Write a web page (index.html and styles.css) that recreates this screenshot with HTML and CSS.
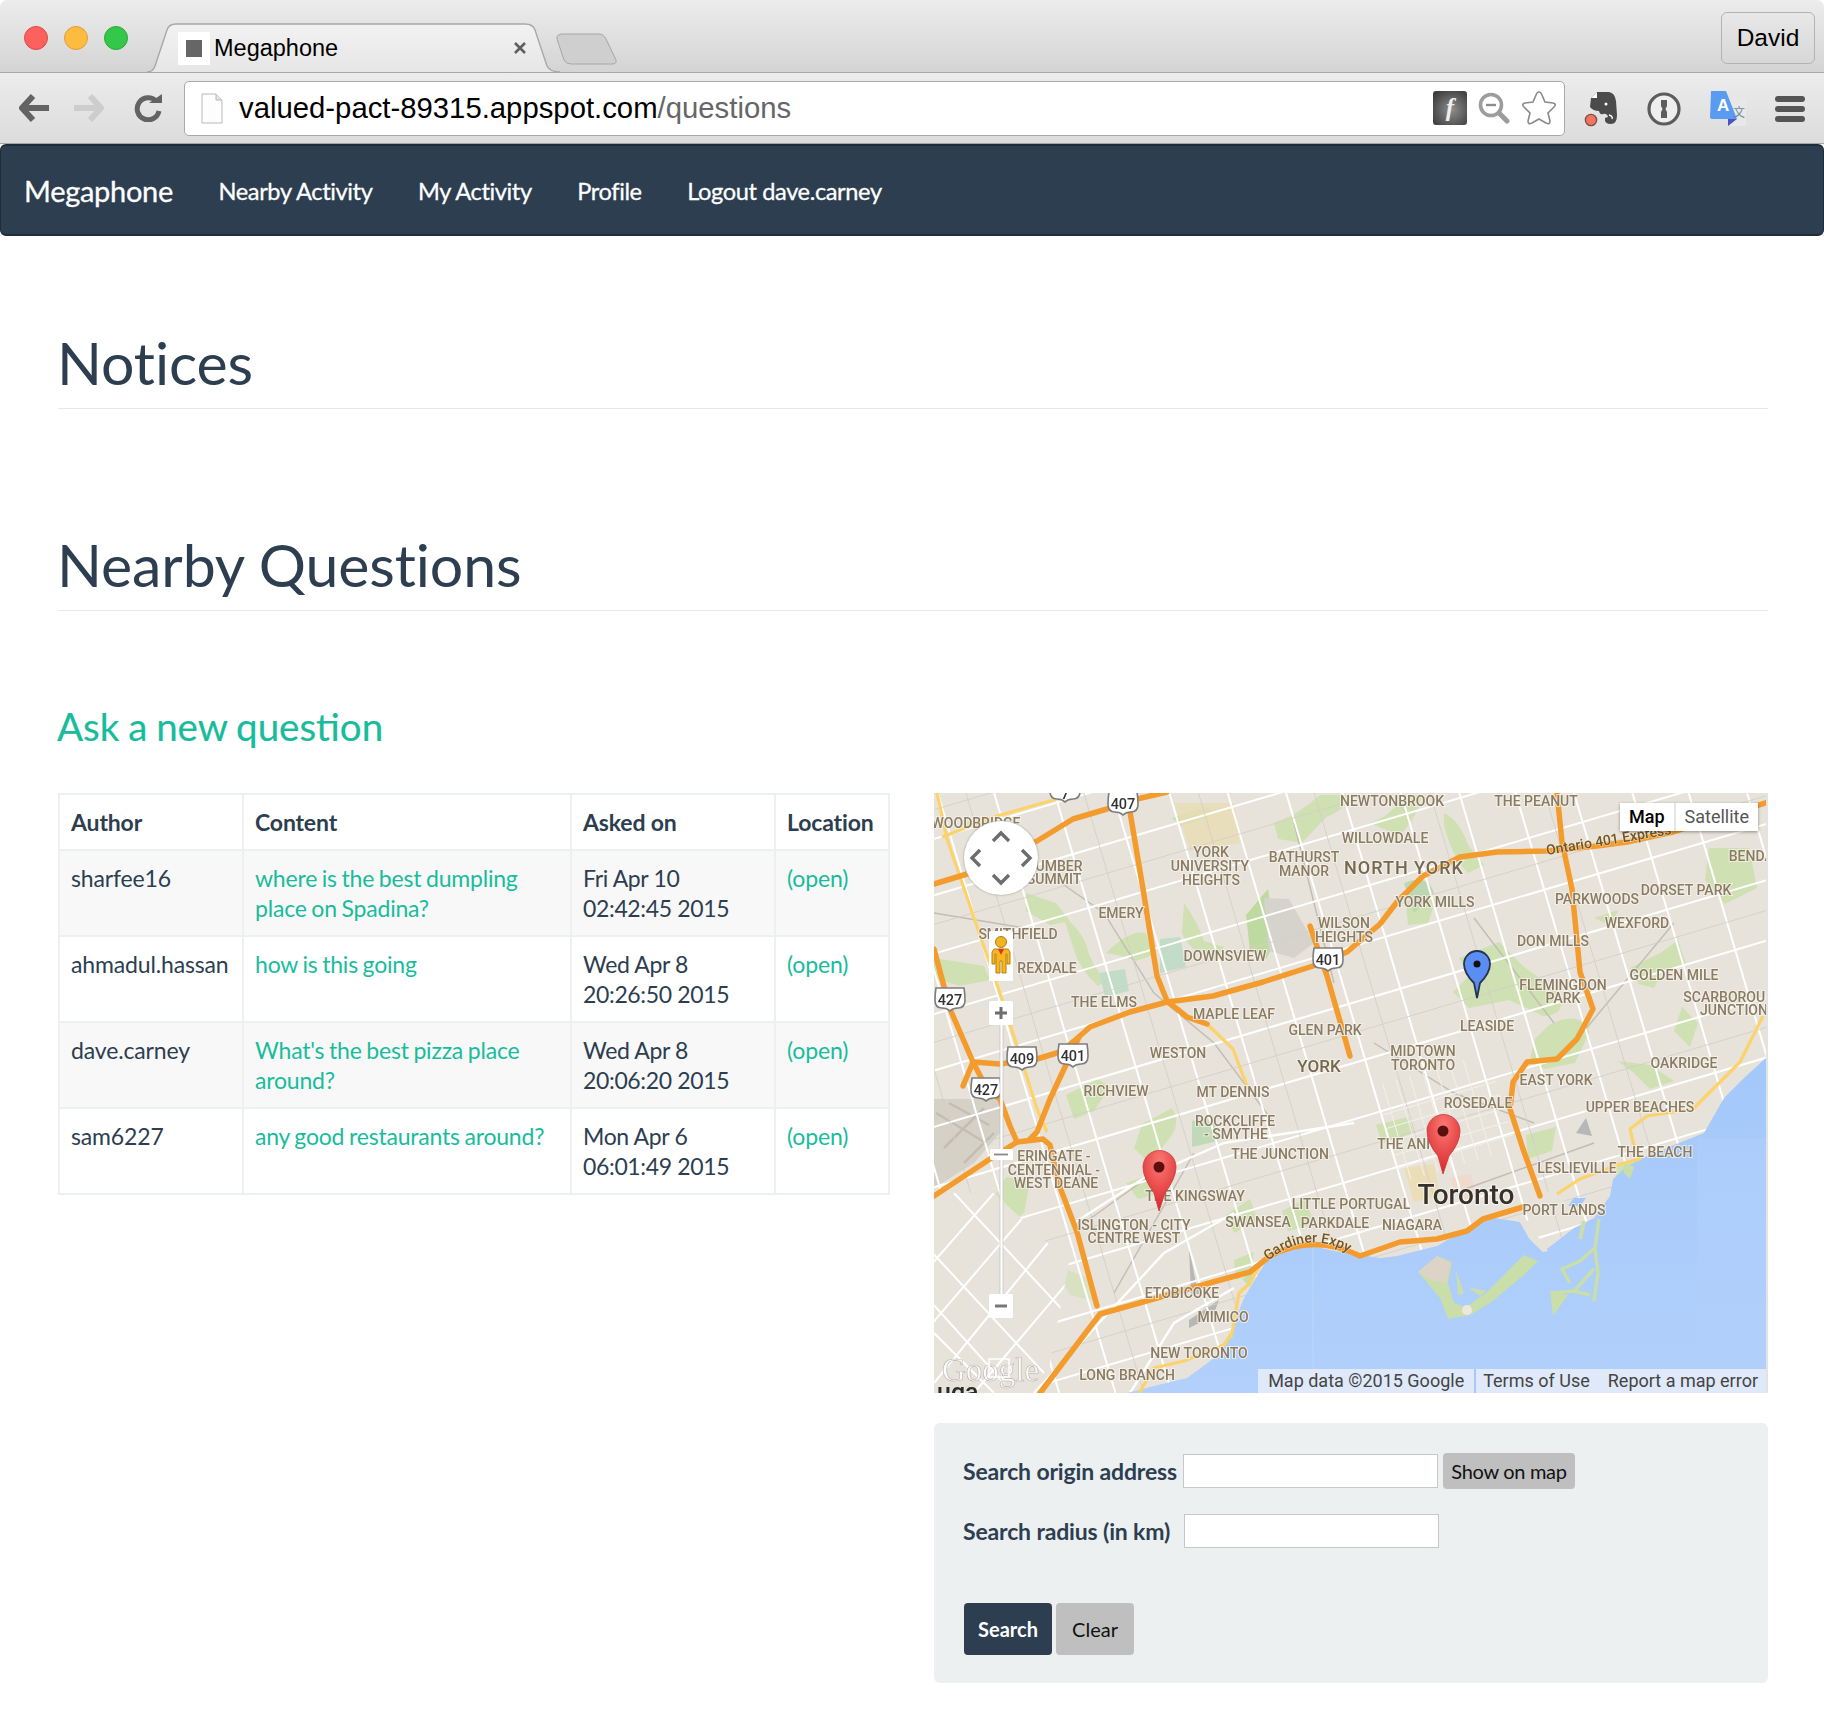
FILE: index.html
```html
<!DOCTYPE html>
<html lang="en">
<head>
<meta charset="utf-8">
<title>Megaphone</title>
<link rel="stylesheet" href="styles.css">
</head>
<body>
<header class="browser">
  <div class="tabstrip">
    <div class="lights"><span class="light red"></span><span class="light amber"></span><span class="light green"></span></div>
    <div class="tab">
      <svg class="tab-shape" viewBox="0 0 413 50" width="413" height="50"><defs><linearGradient id="tabg" x1="0" y1="0" x2="0" y2="1"><stop offset="0" stop-color="#f2f2f2"/><stop offset="1" stop-color="#e6e6e6"/></linearGradient></defs><path d="M0,49 Q6,49 8,43 L20,7 Q22,1 29,1 L378,1 Q386,1 388,7 L400,43 Q403,49 413,49" fill="url(#tabg)" stroke="#a8a8a8" stroke-width="1.4"/></svg>
      <span class="favicon"><i></i></span>
      <span class="tab-title">Megaphone</span>
      <svg class="tab-close" viewBox="0 0 14 14" width="14" height="14"><path d="M2,2 12,12 M12,2 2,12" stroke="#5f5f5f" stroke-width="2.6"/></svg>
    </div>
    <svg class="newtab" viewBox="0 0 62 32" width="62" height="32"><path d="M8,1 H44 Q49,1 51,6 L61,27 Q62,31 57,31 H16 Q11,31 9,27 L2,6 Q1,1 8,1Z" fill="#cfcfcf" stroke="#a6a6a6"/></svg>
    <div class="spacer"></div>
    <div class="user">David</div>
  </div>
  <div class="toolbar">
    <svg class="tool-nav" viewBox="0 0 148 28" width="148" height="28">
      <path d="M14,2 3,14 14,26 M4,14 H30" fill="none" stroke="#636363" stroke-width="6" stroke-linejoin="round"/>
      <path d="M71,2 82,14 71,26 M81,14 H55" fill="none" stroke="#cdcdcd" stroke-width="6" stroke-linejoin="round"/>
      <path d="M137,7 A11,11 0 1 0 140,17" fill="none" stroke="#636363" stroke-width="5"/>
      <path d="M130,9 H143 V0Z" fill="#636363"/>
    </svg>
    <div class="omnibox">
      <svg class="doc" viewBox="0 0 22 31" width="22" height="31"><path d="M1,1 H15 L21,7 V30 H1Z" fill="#fdfdfd" stroke="#b9b9b9"/><path d="M15,1 V7 H21" fill="#e4e4e4" stroke="#b9b9b9"/></svg>
      <span class="url">valued-pact-89315.appspot.com<span class="url-path">/questions</span></span>
      <div class="spacer"></div>
      <span class="flash">f</span>
      <svg class="omni-icon" viewBox="0 0 32 32" width="32" height="32"><circle cx="13" cy="13" r="10.5" fill="none" stroke="#9c9c9c" stroke-width="3.6"/><path d="M8,13 H18" stroke="#8d8d8d" stroke-width="2.4"/><path d="M21,21 29,29" stroke="#9c9c9c" stroke-width="5" stroke-linecap="round"/></svg>
      <svg class="omni-icon" viewBox="0 0 36 36" width="36" height="36"><path d="M18,2 Q20,2 21,5 L24,12 32,13 Q36,14 33,17 L27,23 29,31 Q29,35 25,33 L18,29 11,33 Q7,35 7,31 L9,23 3,17 Q0,14 4,13 L12,12 15,5 Q16,2 18,2Z" fill="#fff" stroke="#8a8a8a" stroke-width="1.6"/></svg>
    </div>
    <div class="extensions">
      <svg viewBox="0 0 34 36" width="34" height="36"><path d="M7,7 13,1 H25 Q31,2 32,10 L33,24 Q33,33 27,33 Q20,33 21,27 L24,26 Q23,22 19,23 Q16,24 15,20 Q9,20 6,16Z" fill="#4b4b4b"/><path d="M7,7 H13 V1Z" fill="#fff"/><path d="M25,24 q4,1 3,4" stroke="#fff" stroke-width="1.4" fill="none"/><circle cx="22" cy="13" r="1.5" fill="#fff"/><circle cx="7" cy="29" r="5.6" fill="#f4745f" stroke="#7b5148" stroke-width="1.4"/></svg>
      <svg viewBox="0 0 34 34" width="34" height="34"><circle cx="17" cy="17" r="15" fill="#eee" stroke="#5c5c5c" stroke-width="3.2"/><path d="M14,8 H20 V14 L18.500,17 20,20 V26 H14 V20 L15.500,17 14,14Z" fill="#5c5c5c"/></svg>
      <svg viewBox="0 0 36 37" width="36" height="37"><rect x="20" y="7" width="16" height="28" rx="2" fill="#e8e8e8"/><path d="M1,1 Q0,0 2,0 H16 L27,28 H3 Q0,28 0,26Z" fill="#5a9bf2"/><path d="M18,28 H27 L18,35Z" fill="#4754c4"/><text class="tr-a" x="7" y="20">A</text><text class="tr-z" x="23" y="26">文</text></svg>
      <svg viewBox="0 0 30 26" width="30" height="26"><rect y="0" width="30" height="6" rx="3" fill="#555"/><rect y="10" width="30" height="6" rx="3" fill="#555"/><rect y="20" width="30" height="6" rx="3" fill="#555"/></svg>
    </div>
  </div>
</header>

<nav class="navbar">
  <a class="brand">Megaphone</a>
  <a class="nav-link">Nearby Activity</a>
  <a class="nav-link">My Activity</a>
  <a class="nav-link">Profile</a>
  <a class="nav-link">Logout dave.carney</a>
</nav>

<main class="page">
  <h1 class="page-title first">Notices</h1>
  <h1 class="page-title second">Nearby Questions</h1>
  <h3 class="ask"><a>Ask a new question</a></h3>

  <div class="columns">
    <table class="questions">
      <colgroup><col class="c1"><col class="c2"><col class="c3"><col class="c4"></colgroup>
      <thead><tr><th>Author</th><th>Content</th><th>Asked on</th><th>Location</th></tr></thead>
      <tbody>
        <tr><td>sharfee16</td><td><a class="q">where is the best dumpling place on Spadina?</a></td><td class="when">Fri Apr 10<br>02:42:45 2015</td><td><a>(open)</a></td></tr>
        <tr><td>ahmadul.hassan</td><td><a class="q">how is this going</a></td><td class="when">Wed Apr 8<br>20:26:50 2015</td><td><a>(open)</a></td></tr>
        <tr><td>dave.carney</td><td><a class="q">What's the best pizza place around?</a></td><td class="when">Wed Apr 8<br>20:06:20 2015</td><td><a>(open)</a></td></tr>
        <tr><td>sam6227</td><td><a class="q">any good restaurants around?</a></td><td class="when">Mon Apr 6<br>06:01:49 2015</td><td><a>(open)</a></td></tr>
      </tbody>
    </table>

    <div class="side">
      <div class="map">
        <svg class="map-svg" viewBox="0 0 834 600" width="834" height="600">
          <defs>
            <g id="shield"><path d="M-14,-11 H14 Q15,-5 15,1 Q15,9 8,9 Q3,9 0,12 Q-3,9 -8,9 Q-15,9 -15,1 Q-15,-5 -14,-11Z" fill="#fff" stroke="#7d7d7d" stroke-width="1.6"/></g>
            <linearGradient id="lake" x1="0" y1="0" x2="0" y2="1"><stop offset="0" stop-color="#a3c8fa"/><stop offset="1" stop-color="#b2d0fb"/></linearGradient>
            <radialGradient id="pinr" cx=".5" cy=".2" r=".8"><stop offset="0" stop-color="#fb7a74"/><stop offset="1" stop-color="#d9252b"/></radialGradient>
            <clipPath id="sw"><path d="M0,400 L60,400 L135,470 L110,600 H0Z"/></clipPath>
          </defs>
          <g class="map-art">
            <rect width="834" height="600" fill="#e7e3da"/>
            <!-- parks -->
            <g fill="#cfe0b2">
              <path d="M30,30 q26,-8 40,0 l-10,10 q-20,0 -30,-10Z"/>
              <path d="M92,100 l30,10 14,18 -20,4 -24,-14Z"/>
              <path d="M130,125 q14,8 22,26 q4,20 20,36 l-8,6 q-18,-16 -24,-36Z"/>
              <path d="M0,165 l50,8 6,14 -30,6 -26,-8Z"/>
              <path d="M172,160 q24,-24 40,-20 l6,22 -16,6 q-16,-6 -30,-8Z"/>
              <path d="M250,110 q14,20 20,38 l20,6 -8,12 q-26,-6 -34,-26Z"/>
              <path d="M312,122 l22,-26 8,52 -10,18 -16,-8Z" fill="#bfdaa0"/>
              <path d="M238,25 q24,-10 40,-10 l-4,10 -28,8Z"/>
              <path d="M340,30 q24,-8 46,-28 h30 q-6,16 -24,22 l-24,26 -24,-4Z"/>
              <path d="M436,30 q24,-8 32,-28 h20 q-8,30 -24,40Z"/>
              <path d="M510,20 q16,8 24,32 l16,20 -16,8 q-16,-16 -24,-48Z"/>
              <path d="M472,110 l30,-4 -8,24 -20,2Z"/>
              <path d="M525,165 l40,-16 24,24 36,26 q8,24 -16,24 l-34,-16 -40,8 -16,-16 16,-16Z"/>
              <path d="M615,232 q32,-16 40,8 l-14,30 -30,6 -16,-6 6,-24Z"/>
              <path d="M660,125 l24,-8 -6,16Z"/>
              <path d="M696,175 l32,-16 16,-12 8,24 -24,8 -8,16 -16,-4Z"/>
              <path d="M775,55 h40 l8,40 -32,16 -20,-24Z"/>
              <path d="M684,268 l32,4 24,16 -24,8 -16,-16Z"/>
              <path d="M748,214 l16,16 -8,24 -16,-16Z"/>
              <path d="M238,315 q10,16 -4,32 l-18,24 -16,-16 8,-24Z"/>
              <path d="M258,328 l22,-4 4,24 -26,6Z" fill="#c0dab8"/>
              <path d="M72,384 l24,4 -6,32 -24,16 -16,-16Z"/>
              <path d="M192,390 l24,-8 12,18 -24,6Z"/>
              <path d="M292,422 l24,-16 8,22 -24,12Z"/>
              <path d="M348,418 l24,-12 8,26 -26,6Z"/>
              <path d="M300,467 l20,-8 -4,20 -14,8Z"/>
              <path d="M120,472 l32,12 8,24 -24,-6Z" opacity=".6"/>
              <path d="M0,495 l24,32 -8,16 -16,-16Z" opacity=".6"/>
              <path d="M132,302 l32,-16 12,8 -16,24 -20,8Z"/>
              <path d="M442,332 l32,-8 6,16 -32,10Z"/>
              <path d="M592,342 l30,-8 -4,24 -24,8Z"/>
              <path d="M682,372 l24,-8 -8,20 -16,4Z"/>
            </g>
            <path d="M226,146 l20,-2 6,30 -26,6Z" fill="#c2dcc8"/>
            <path d="M165,180 l26,-4 4,22 -24,6Z" fill="#c2dcc8"/>
            <path d="M240,10 h60 l6,40 -50,8Z" fill="#e8dcb4" opacity=".8"/>
            <path d="M470,90 q24,-10 30,10 l-20,20Z" fill="#bbd8b2"/>
            <path d="M330,105 L355,106 380,150 360,165 335,158Z" fill="#d6d3cd"/>
            <path d="M0,306 H66 V340 L40,370 0,395Z" fill="#d6d1c7"/>
            <path d="M2,320 l50,30 M15,310 l40,22 M10,355 l40,-40 M30,370 l30,-30" stroke="#c4beb2" stroke-width="2.500"/>
            <path d="M470,375 l30,-4 6,32 -26,6Z" fill="#ecdcae" opacity=".8"/>
            <path d="M516,385 l20,-4 8,24 -18,4Z" fill="#f0d8c8" opacity=".8"/>
            <!-- thin grey roads / rails -->
            <path d="M120,85 L170,120 220,200 280,250 340,330 M0,120 L90,135 M360,30 L400,190 M540,125 L620,230 M640,250 L740,130 M440,250 L520,300 600,330 M180,500 L260,360 M520,400 L660,350 M150,430 L220,380" fill="none" stroke="#c2bdb3" stroke-width="1.400"/>
            <path d="M255,455 l8,40 6,6 -12,0Z M255,527 l30,-20 -6,16 -24,12Z M642,340 l10,-15 6,18Z" fill="#b7b7b7"/>
            <!-- arterial grid -->
            <g transform="rotate(-16.5 417 300)" fill="none" stroke="#fff">
              <path stroke-width="2" d="M-300,-118 H1200 M-300,-62 H1200 M-300,-8 H1200 M-300,48 H1200 M-300,106 H1200 M-300,160 H1200 M-300,214 H1200 M-300,272 H1200 M-300,326 H1200 M-300,384 H1200 M-300,436 H1200 M-300,492 H1200 M-300,548 H1200 M-300,604 H1200 M-300,660 H1200 M-300,716 H1200"/>
              <path stroke-width="2" d="M-60,-300 V1000 M-4,-300 V1000 M52,-300 V1000 M106,-300 V1000 M160,-300 V1000 M218,-300 V1000 M274,-300 V1000 M328,-300 V1000 M384,-300 V1000 M440,-300 V1000 M494,-300 V1000 M550,-300 V1000 M606,-300 V1000 M660,-300 V1000 M716,-300 V1000 M772,-300 V1000 M826,-300 V1000 M882,-300 V1000"/>
              <path stroke-width=".8" stroke="#d3cfc6" d="M-300,-90 H1200 M-300,20 H1200 M-300,133 H1200 M-300,243 H1200 M-300,355 H1200 M-300,464 H1200 M24,-300 V1000 M133,-300 V1000 M246,-300 V1000 M356,-300 V1000 M467,-300 V1000 M578,-300 V1000 M688,-300 V1000"/>
              <path stroke-width="1" stroke="#f3f0ea" d="M440,330 H560 M440,344 H560 M440,358 H560 M440,372 H560 M440,386 H560 M450,300 V400 M464,300 V400 M478,300 V400 M492,300 V400 M506,300 V400 M520,300 V400 M534,300 V400"/>
            </g>
            <g clip-path="url(#sw)" fill="none" stroke="#fff" stroke-width="2">
              <rect x="0" y="400" width="140" height="200" fill="#e7e3da" stroke="none"/>
              <path d="M-20,440 L110,580 M-20,490 L70,590 M20,400 L150,540 M0,540 L60,600 M40,600 L150,470 M0,590 L130,430 M-10,540 L110,400 M-10,480 L60,400"/>
            </g>
            <path d="M196,600 L240,530 300,495 M100,600 L230,460 300,420 M140,430 L210,385 290,350 420,330" fill="none" stroke="#fff" stroke-width="2.400"/>
            <!-- water -->
            <path d="M834,263 L810,285 790,305 770,340 740,352 706,366 690,376 679,386 676,403 660,425 640,435 609,459 595,445 586,429 560,425 540,432 503,453 463,463 446,465 400,458 379,453 350,455 336,463 323,483 310,505 300,530 296,545 283,563 253,585 220,593 193,600 H834Z" fill="url(#lake)"/>
            <path d="M379,453 V576" stroke="#bdd7fc" stroke-width="1"/>
            <rect x="763" y="345" width="71" height="231" fill="#b2d0fb" opacity=".5"/>
            <path d="M586,429 L608,425 600,438 614,458 609,459 595,445Z M605,400 L640,395 625,416 600,420Z" fill="#e7e3da"/>
            <path d="M640,405 h12 l-6,8 h-12Z" fill="#a3c8fa"/>
            <!-- islands -->
            <path d="M484,479 L503,463 518,469 514,490 520,510 532,514 552,500 582,470 590,462 604,468 590,482 556,510 536,522 514,526 506,505Z" fill="#c9dea9"/>
            <path d="M484,479 L503,463 517,470 512,490 498,488Z" fill="#dcd5c7"/>
            <path d="M522,478 l8,22 -6,2Z M534,494 l18,4 -6,5Z" fill="#c9dea9"/>
            <circle cx="533" cy="517" r="5" fill="#eee8dc"/>
            <g fill="none" stroke="#c9dea9" stroke-linejoin="round">
              <path stroke-width="3.500" d="M665,426 L661,455 664,480 660,508 M661,455 L646,468 628,476 636,490 M660,476 L640,498 618,500 M640,498 L656,502"/>
              <path stroke-width="4" d="M650,428 L646,446"/>
            </g>
            <path d="M616,497 L619,523 634,502Z" fill="#c9dea9"/>
            <path d="M308,486 l12,-8 -4,16Z M290,550 l6,-10 4,4Z M690,370 l10,4 -4,12 -6,-6Z" fill="#c9dea9"/>
            <!-- yellow -->
            <g fill="none" stroke="#fcd26a" stroke-width="3.200" stroke-linejoin="round">
              <path d="M3,0 L13,46 36,113 69,209 103,316 113,339"/>
              <path d="M123,6 L63,23 8,44"/>
              <path d="M273,231 L299,256 313,293"/>
              <path d="M623,401 L646,386 686,371 706,366 699,349 696,336 713,323 759,316 806,269 829,223"/>
              <path d="M330,465 L316,490 305,500 298,540 290,552 250,568 220,575 205,600"/>
            </g>
            <!-- highways -->
            <g fill="none" stroke="#f49b2e" stroke-width="5.500" stroke-linejoin="round" stroke-linecap="round">
              <path d="M0,91 L33,81 103,48 139,26 173,16 203,6 233,-1"/>
              <path d="M196,19 L209,96 223,183 233,208 253,224 273,231"/>
              <path d="M139,249 L156,234 196,219 233,209 279,203 329,189 379,173 413,159 446,131 463,109 489,83 526,64 563,59 613,58 663,53 693,49 739,39 834,9"/>
              <path d="M139,249 L126,259 103,266 66,271 39,269 29,293"/>
              <path d="M145,244 L116,306 103,339 96,346"/>
              <path d="M0,156 L16,216 39,269 53,296 66,306 76,333 83,349"/>
              <path d="M0,403 L56,366 83,349 109,346 116,352 124,389 143,439 163,513"/>
              <path d="M376,133 L393,183 416,263"/>
              <path d="M623,0 L628,49 638,96 646,179 659,216 643,246 623,266 593,269 579,289 576,316 589,356 606,403"/>
              <path d="M106,600 L166,521 209,509 279,489 316,479 336,463"/>
              <path d="M336,463 Q380,440 426,463 L466,449 503,446 533,438 549,426 589,414"/>
            </g>
            <!-- labels -->
            <g class="lbl">
              <text x="42" y="35">WOODBRIDGE</text><text x="120" y="78">HUMBER</text><text x="120" y="91">SUMMIT</text>
              <text x="187" y="125">EMERY</text><text x="84" y="146">SMITHFIELD</text><text x="113" y="180">REXDALE</text><text x="170" y="214">THE ELMS</text>
              <text x="277" y="64">YORK</text><text x="276" y="78">UNIVERSITY</text><text x="277" y="92">HEIGHTS</text>
              <text x="370" y="69">BATHURST</text><text x="370" y="83">MANOR</text>
              <text x="458" y="13">NEWTONBROOK</text><text x="451" y="50">WILLOWDALE</text><text x="602" y="13">THE PEANUT</text>
              <text x="291" y="168">DOWNSVIEW</text><text x="410" y="135">WILSON</text><text x="410" y="149">HEIGHTS</text>
              <text x="300" y="226">MAPLE LEAF</text><text x="391" y="242">GLEN PARK</text><text x="244" y="265">WESTON</text>
              <text x="182" y="303">RICHVIEW</text><text x="299" y="304">MT DENNIS</text>
              <text x="501" y="114">YORK MILLS</text><text x="663" y="111">PARKWOODS</text><text x="752" y="102">DORSET PARK</text><text x="703" y="135">WEXFORD</text>
              <text x="619" y="153">DON MILLS</text><text x="825" y="68">BENDALE</text><text x="740" y="187">GOLDEN MILE</text>
              <text x="629" y="197">FLEMINGDON</text><text x="629" y="210">PARK</text><text x="800" y="209">SCARBOROUGH</text><text x="800" y="222">JUNCTION</text>
              <text x="553" y="238">LEASIDE</text><text x="489" y="263">MIDTOWN</text><text x="489" y="277">TORONTO</text>
              <text x="750" y="275">OAKRIDGE</text><text x="622" y="292">EAST YORK</text><text x="544" y="315">ROSEDALE</text><text x="706" y="319">UPPER BEACHES</text>
              <text x="301" y="333">ROCKCLIFFE</text><text x="302" y="346">- SMYTHE</text><text x="346" y="366">THE JUNCTION</text>
              <text x="120" y="368">ERINGATE -</text><text x="120" y="382">CENTENNIAL -</text><text x="122" y="395">WEST DEANE</text>
              <text x="261" y="408">THE KINGSWAY</text><text x="417" y="416">LITTLE PORTUGAL</text><text x="401" y="435">PARKDALE</text><text x="324" y="434">SWANSEA</text>
              <text x="200" y="437">ISLINGTON - CITY</text><text x="200" y="450">CENTRE WEST</text>
              <text x="248" y="505">ETOBICOKE</text><text x="289" y="529">MIMICO</text><text x="265" y="565">NEW TORONTO</text><text x="193" y="587">LONG BRANCH</text>
              <text x="481" y="356">THE ANNEX</text><text x="478" y="437">NIAGARA</text><text x="630" y="422">PORT LANDS</text><text x="643" y="380">LESLIEVILLE</text><text x="721" y="364">THE BEACH</text>
            </g>
            <text class="lbl-big" x="470" y="81">NORTH YORK</text>
            <text class="lbl-york" x="385" y="279">YORK</text>
            <text class="lbl-city" x="532" y="411">Toronto</text>
            <text class="lbl-road" transform="translate(613 62) rotate(-9.500)">Ontario 401 Express</text>
            <path id="gard" d="M334,468 Q378,432 424,466" fill="none"/>
            <text class="lbl-road"><textPath href="#gard">Gardiner Expy</textPath></text>
            <!-- shields -->
            <use href="#shield" x="189" y="10"/><text class="shd" x="189" y="16">407</text>
            <use href="#shield" x="394" y="166"/><text class="shd" x="394" y="172">401</text>
            <use href="#shield" x="139" y="262"/><text class="shd" x="139" y="268">401</text>
            <use href="#shield" x="88" y="265"/><text class="shd" x="88" y="271">409</text>
            <use href="#shield" x="16" y="206"/><text class="shd" x="16" y="212">427</text>
            <use href="#shield" x="52" y="296"/><text class="shd" x="52" y="302">427</text>
            <use href="#shield" x="131" y="-3"/><text class="shd" x="131" y="6">7</text>
            <!-- google mark -->
            <text class="uga" x="3" y="608">uga</text>
            <text class="goog" x="8" y="588">Google</text>
            <rect x="55" y="566" width="20" height="18" fill="none" stroke="#fff" stroke-width="1.500"/>
            <!-- pins -->
            <path d="M543,205 L540,190 Q530,180 530,171 A13,13 0 1 1 556,171 Q556,180 546,190Z" fill="#5b8ef5" stroke="#26344d" stroke-width="1.800"/><circle cx="543" cy="171" r="3.500" fill="#111"/>
            <path d="M225,418 L220,400 Q209,385 209,374 A16.500,16.500 0 1 1 242,374 Q242,385 231,400Z" fill="url(#pinr)" stroke="#c8383a" stroke-width=".8"/><circle cx="225" cy="374" r="5.500" fill="#5b0f0f"/>
            <path d="M509,381 L504,363 Q493,350 493,338 A16.500,16.500 0 1 1 526,338 Q526,350 515,363Z" fill="url(#pinr)" stroke="#c8383a" stroke-width=".8"/><circle cx="509" cy="338" r="5.500" fill="#5b0f0f"/>
          </g>
          <!-- controls -->
          <circle cx="67" cy="65" r="37" fill="#fff" filter="drop-shadow(0 0 1px #999)"/>
          <path d="M59,48 67,40 75,48 M59,82 67,90 75,82 M46,57 38,65 46,73 M88,57 96,65 88,73" fill="none" stroke="#6d6d6d" stroke-width="3.400"/>
          <rect x="55" y="138" width="24" height="50" rx="1.500" fill="#fff"/>
          <circle cx="67" cy="149" r="5.500" fill="#f4b320" stroke="#b07a10"/>
          <path d="M60,156 H74 L76,159 V171 H73 V161 H72 V180 H68 V168 H66 V180 H62 V161 H61 V171 H58 V159Z" fill="#f8b621" stroke="#b87e10"/><path d="M64,156 H70 L67,162Z" fill="#d8382c"/>
          <rect x="66" y="225" width="3" height="280" fill="#fff" stroke="#bbb" stroke-width=".6"/>
          <rect x="55" y="208" width="24" height="24" rx="1.500" fill="#fff"/>
          <path d="M67,214 V226 M61,220 H73" stroke="#6d6d6d" stroke-width="3"/>
          <rect x="56" y="356" width="23" height="11" rx="1.500" fill="#fff"/><path d="M60,361.500 H74" stroke="#888" stroke-width="1.800"/>
          <rect x="55" y="501" width="24" height="24" rx="1.500" fill="#fff"/><path d="M61,513 H73" stroke="#777" stroke-width="3"/>
        </svg>
        <div class="maptype"><span class="mt on">Map</span><span class="mt">Satellite</span></div>
        <div class="attrib"><span>Map data ©2015 Google</span><span class="sep">Terms of Use</span><span>Report a map error</span></div>
      </div>

      <form class="search">
        <div class="row r1"><label>Search origin address</label><input class="field" type="text"><span class="btn small">Show on map</span></div>
        <div class="row r2"><label>Search radius (in km)</label><input class="field" type="text"></div>
        <div class="actions"><span class="btn primary">Search</span><span class="btn plain">Clear</span></div>
      </form>
    </div>
  </div>
</main>
</body>
</html>
```

FILE: styles.css
```css
* { box-sizing: border-box; }
html, body { margin: 0; padding: 0; background: #fff; }
body { font-family: Lato, "Liberation Sans", sans-serif; font-size: 23px; line-height: 30px; color: #2c3e50; width: 1824px; height: 1730px; overflow: hidden; }

.browser { font-family: "Liberation Sans", Arial, sans-serif; color: #000; }
.tabstrip { height: 73px; display: flex; align-items: flex-start; background: linear-gradient(#ececec, #d4d4d4); border-bottom: 1px solid #a7a7a7; border-radius: 7px 7px 0 0; }
.lights { display: flex; gap: 16px; padding: 26px 0 0 24px; }
.light { width: 24px; height: 24px; border-radius: 50%; display: block; }
.red { background: #fc615d; border: 1px solid #df4744; }
.amber { background: #fdbc40; border: 1px solid #de9f34; }
.green { background: #34c84a; border: 1px solid #27aa35; }
.tab { position: relative; width: 413px; height: 50px; margin: 23px 0 0 19px; display: flex; align-items: center; z-index: 1; }
.tab-shape { position: absolute; left: 0; top: 0; }
.favicon { position: relative; margin-left: 31px; width: 32px; height: 33px; background: #fff; display: flex; align-items: center; justify-content: center; }
.favicon i { display: block; width: 16px; height: 17px; background: #666; }
.tab-title { position: relative; font-size: 23.5px; margin-left: 4px; }
.tab-close { position: relative; margin-left: 175px; }
.newtab { margin: 33px 0 0 -5px; }
.spacer { flex: 1; }
.user { width: 94px; height: 52px; margin: 12px 9px 0 0; border: 1px solid #b3b3b3; border-radius: 6px; font-size: 24.5px; display: flex; align-items: center; justify-content: center; }

.toolbar { height: 71px; display: flex; align-items: center; background: linear-gradient(#ececec, #dcdcdc); border-bottom: 1px solid #a5a5a5; }
.tool-nav { margin-left: 19px; flex: none; }
.omnibox { width: 1381px; height: 55px; margin-left: 17px; background: #fff; border: 1px solid #aaa; border-radius: 5px; display: flex; align-items: center; padding: 0 7px 0 16px; }
.doc { flex: none; }
.url { font-size: 29.3px; margin-left: 16px; color: #000; }
.url-path { color: #666; }
.flash { width: 34px; height: 34px; border-radius: 3px; background: radial-gradient(circle at 55% 55%, #8e8e8e, #3e3e3e 85%); color: #eee; font: italic 700 25px/34px "Liberation Serif", serif; text-align: center; }
.omni-icon { margin-left: 11px; flex: none; }
.extensions { display: flex; align-items: center; gap: 29px; margin-left: 19px; padding-top: 2px; }
.tr-a { font: 700 17px "Liberation Sans", sans-serif; fill: #fff; }
.tr-z { font: 12px "Noto Sans CJK SC", sans-serif; fill: #6b8c9e; }

.navbar { height: 92px; background: #2c3e50; border: 1px solid #1f2d3b; border-width: 2px 1px 2px; border-radius: 6px; display: flex; align-items: center; padding: 2px 0 0 23px; gap: 45.5px; color: #fff; }
.brand { font-size: 29px; letter-spacing: -.3px; -webkit-text-stroke: .3px #fff; }
.nav-link { font-size: 23.6px; letter-spacing: -.38px; -webkit-text-stroke: .3px #fff; }

.page { padding: 0 56px 0 58px; }
.page-title { margin: 0; font-weight: 400; font-size: 59px; line-height: 66px; letter-spacing: -.1px; border-bottom: 1px solid #e4e8e9; text-indent: -1px; height: 96px; padding-top: 17px; }
.first { margin-top: 77px; }
.second { margin-top: 106px; }
.ask { margin: 93px 0 0; font-size: 38.5px; line-height: 44px; font-weight: 400; color: #18bc9c; text-indent: -1px; word-spacing: -1px; -webkit-text-stroke: .2px #18bc9c; }
.columns { display: grid; grid-template-columns: 832px 834px; gap: 44px; margin-top: 45px; align-items: start; }

.questions { border-collapse: collapse; table-layout: fixed; width: 830px; border: 2px solid #ecf0f1; }
.c1 { width: 184px; } .c2 { width: 328px; } .c3 { width: 204px; } .c4 { width: 114px; }
.questions th, .questions td { border: 2px solid #ecf0f1; padding: 12px 11px; text-align: left; vertical-align: top; letter-spacing: -.15px; }
.questions th { font-weight: 700; padding: 12px 11px 11px; height: 56px; }
.questions tbody tr:nth-child(odd) { background: #f8f8f8; }
.questions td { height: 86px; }
.questions td.when { letter-spacing: -.35px; }
.questions a { color: #18bc9c; }
.questions a.q { letter-spacing: -.2px; word-spacing: -1px; }

.map { position: relative; width: 834px; height: 600px; overflow: hidden; border-right: 2px solid #e3e3e3; }
.map-svg { display: block; width: 834px; height: 600px; }
.map-art { filter: blur(.4px); }
.lbl text, .lbl-big, .lbl-york { font-family: Roboto, sans-serif; font-weight: 500; fill: #8a7b62; stroke: rgba(245,243,236,.75); stroke-width: 2.2px; paint-order: stroke; text-anchor: middle; }
.lbl text { font-size: 14px; }
.lbl-big { font-size: 18px; letter-spacing: 1px; fill: #75684f; }
.lbl-york { font-size: 17px; fill: #75684f; }
.lbl-city { font-family: Roboto, sans-serif; font-weight: 500; font-size: 28px; text-anchor: middle; fill: #35322a; stroke: rgba(245,243,236,.8); stroke-width: 2.4px; paint-order: stroke; }
.lbl-road { font-family: Roboto, sans-serif; font-size: 14px; font-weight: 500; fill: #6f5529; stroke: rgba(250,235,205,.6); stroke-width: 1.5px; paint-order: stroke; }
.shd { font: 500 14.5px Roboto, sans-serif; fill: #333; text-anchor: middle; }
.goog { font-family: "Liberation Serif", serif; font-size: 33px; fill: rgba(255,255,255,.85); stroke: rgba(120,120,120,.5); stroke-width: .6px; }
.uga { font: 500 25px Roboto, sans-serif; fill: #2b2b2b; }

.maptype { position: absolute; top: 10px; right: 8px; display: flex; gap: 2px; font: 18px/28px Roboto, sans-serif; color: #555; box-shadow: 0 1px 3px rgba(0,0,0,.4); background: #e5e5e5; }
.mt { height: 28px; background: #fff; padding: 0 9px; }
.mt.on { color: #000; font-weight: 500; }
.attrib { position: absolute; right: 0; bottom: 0; height: 24px; display: flex; font: 18px/24px Roboto, sans-serif; color: #444; background: #dfe9f9; padding: 0 8px 0 10px; }
.attrib .sep { border-left: 2px solid #aac8f5; margin-left: 10px; padding-left: 7px; margin-right: 18px; }

.search { margin-top: 30px; height: 260px; background: #ecf0f1; border-radius: 6px; padding: 31px 0 0 29px; }
.row { display: flex; align-items: center; font-weight: 700; }
.row label { letter-spacing: -.15px; }
.r1 { height: 34px; gap: 6px; }
.r2 { height: 34px; gap: 14px; margin-top: 26px; }
.field { width: 255px; height: 34px; border: 1px solid #c6c9c9; background: #fff; margin: 0; padding: 0; }
.btn { display: inline-flex; align-items: center; justify-content: center; border-radius: 4px; background: #bfbfbf; color: #111; font-weight: 400; }
.small { width: 132px; height: 36px; margin-left: -1px; font-size: 20px; letter-spacing: -.3px; }
.actions { display: flex; gap: 4px; margin-top: 55px; margin-left: 1px; }
.primary { width: 88px; height: 52px; background: #2c3e50; color: #fff; font-weight: 700; font-size: 20px; }
.plain { width: 78px; height: 52px; font-size: 20px; }
```
